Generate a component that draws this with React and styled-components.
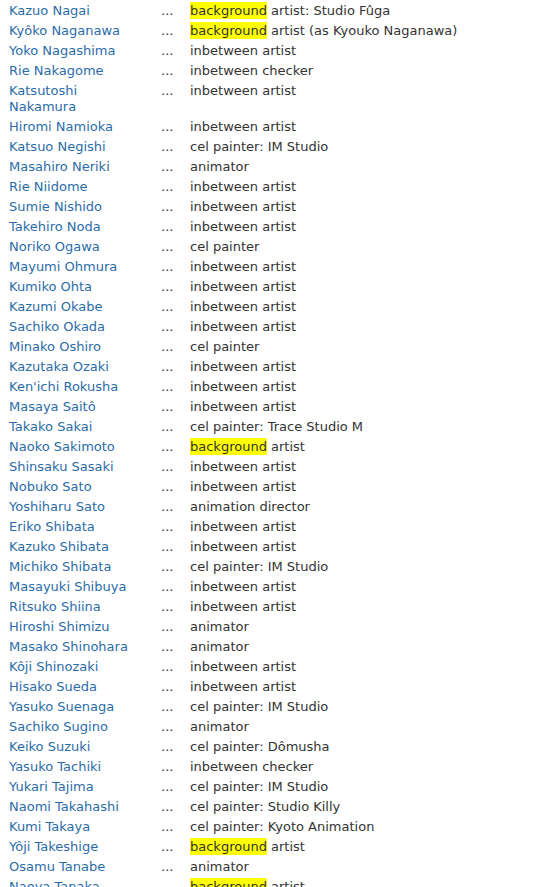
import React from "react";
import styled, { createGlobalStyle } from "styled-components";

const Global = createGlobalStyle`
  html, body { margin: 0; padding: 0; background: #fff; }
  body { font-family: "DejaVu Sans", Verdana, sans-serif; font-size: 13px; color: #333; }
`;

const List = styled.div`
  display: flex;
  flex-direction: column;
  padding: 1px 0 0 9px;
`;

const Row = styled.div`
  display: grid;
  grid-template-columns: 152px 29px 1fr;
  align-items: start;
  padding: 2px 0;
  line-height: 16px;
`;

const Name = styled.a`
  color: #2b6ca8;
  text-decoration: none;
  padding-right: 14px;
`;

const Dots = styled.span`
  color: #333;
`;

const Credit = styled.span`
  color: #333;
  white-space: nowrap;
`;

const Hl = styled.span`
  background: #ffff00;
  padding: 1px 0;
`;

const rows = [
  ["Kazuo Nagai", "bg", " artist: Studio Fûga"],
  ["Kyôko Naganawa", "bg", " artist (as Kyouko Naganawa)"],
  ["Yoko Nagashima", "", "inbetween artist"],
  ["Rie Nakagome", "", "inbetween checker"],
  ["Katsutoshi Nakamura", "", "inbetween artist"],
  ["Hiromi Namioka", "", "inbetween artist"],
  ["Katsuo Negishi", "", "cel painter: IM Studio"],
  ["Masahiro Neriki", "", "animator"],
  ["Rie Niidome", "", "inbetween artist"],
  ["Sumie Nishido", "", "inbetween artist"],
  ["Takehiro Noda", "", "inbetween artist"],
  ["Noriko Ogawa", "", "cel painter"],
  ["Mayumi Ohmura", "", "inbetween artist"],
  ["Kumiko Ohta", "", "inbetween artist"],
  ["Kazumi Okabe", "", "inbetween artist"],
  ["Sachiko Okada", "", "inbetween artist"],
  ["Minako Oshiro", "", "cel painter"],
  ["Kazutaka Ozaki", "", "inbetween artist"],
  ["Ken'ichi Rokusha", "", "inbetween artist"],
  ["Masaya Saitô", "", "inbetween artist"],
  ["Takako Sakai", "", "cel painter: Trace Studio M"],
  ["Naoko Sakimoto", "bg", " artist"],
  ["Shinsaku Sasaki", "", "inbetween artist"],
  ["Nobuko Sato", "", "inbetween artist"],
  ["Yoshiharu Sato", "", "animation director"],
  ["Eriko Shibata", "", "inbetween artist"],
  ["Kazuko Shibata", "", "inbetween artist"],
  ["Michiko Shibata", "", "cel painter: IM Studio"],
  ["Masayuki Shibuya", "", "inbetween artist"],
  ["Ritsuko Shiina", "", "inbetween artist"],
  ["Hiroshi Shimizu", "", "animator"],
  ["Masako Shinohara", "", "animator"],
  ["Kôji Shinozaki", "", "inbetween artist"],
  ["Hisako Sueda", "", "inbetween artist"],
  ["Yasuko Suenaga", "", "cel painter: IM Studio"],
  ["Sachiko Sugino", "", "animator"],
  ["Keiko Suzuki", "", "cel painter: Dômusha"],
  ["Yasuko Tachiki", "", "inbetween checker"],
  ["Yukari Tajima", "", "cel painter: IM Studio"],
  ["Naomi Takahashi", "", "cel painter: Studio Killy"],
  ["Kumi Takaya", "", "cel painter: Kyoto Animation"],
  ["Yôji Takeshige", "bg", " artist"],
  ["Osamu Tanabe", "", "animator"],
  ["Naoya Tanaka", "bg", " artist"],
];

export default function App() {
  return (
    <>
      <Global />
      <List>
        {rows.map(([name, hl, rest]) => (
          <Row key={name}>
            <Name href="#">{name}</Name>
            <Dots>...</Dots>
            <Credit>
              {hl && <Hl>background</Hl>}
              {rest}
            </Credit>
          </Row>
        ))}
      </List>
    </>
  );
}
